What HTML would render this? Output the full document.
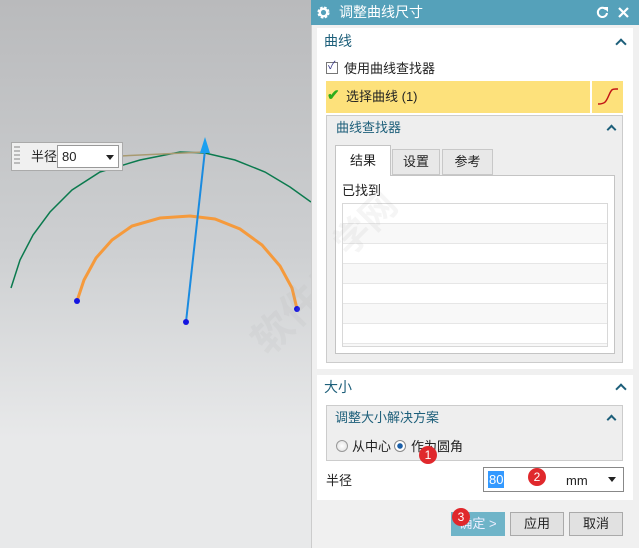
<!DOCTYPE html>
<html><head><meta charset="utf-8"><style>
*{margin:0;padding:0;box-sizing:border-box}
body{width:639px;height:548px;overflow:hidden;font-family:"Liberation Sans","Noto Sans CJK SC",sans-serif;font-size:13px;line-height:1.35;color:#222;position:relative;background:#f0f0f0}
.a{position:absolute}
.vp{left:0;top:0;width:311px;height:548px;background:linear-gradient(#b9babc,#cdcfd1 45%,#e8e9ea 80%,#e8e9ea)}
.hdr{color:#1d5f7a}
.car{position:absolute;width:8px;height:8px;border-left:2.5px solid #1d5f7a;border-top:2.5px solid #1d5f7a;transform:rotate(45deg)}
.btn{position:absolute;top:512px;height:24px;border:1px solid #aaa;background:#e1e1e1;text-align:center;line-height:22px;font-size:13px}
.badge{position:absolute;width:18px;height:18px;border-radius:50%;background:#e0282c;color:#fff;font-size:12px;text-align:center;line-height:18px}
</style></head><body>
<div class="a vp"></div>
<svg class="a" style="left:0;top:0" width="311" height="548">
<polyline fill="none" stroke="#0b7a4e" stroke-width="1.5" points="11,288 20,260 33,235 50,212 72,190 100,172 140,160 180,152 205,153 235,160 265,172 290,187 311,202"/>
<line x1="120" y1="156" x2="205" y2="152" stroke="#a89a70" stroke-width="1.5"/>
<polyline fill="none" stroke="#f59a3c" stroke-width="3" points="77,301 84,280 96,258 112,240 132,226 160,218 190,216 215,219 240,229 262,245 280,266 292,288 297,309"/>
<line x1="186" y1="322" x2="205" y2="150" stroke="#1a8be0" stroke-width="2"/>
<polygon points="205,137 200,153 210,153" fill="#1aa0f0"/>
<circle cx="77" cy="301" r="3" fill="#1515e0"/><circle cx="297" cy="309" r="3" fill="#1515e0"/><circle cx="186" cy="322" r="3" fill="#1515e0"/>
</svg>
<div class="a" style="left:11px;top:142px;width:112px;height:29px;background:#f0f0f0;border:1px solid #aaa"></div>
<div class="a" style="left:14px;top:146px;width:6px;height:20px;background:repeating-linear-gradient(#bbb 0 2px,transparent 2px 4px)"></div>
<div class="a" style="left:31px;top:148px;font-size:13px">半径</div>
<div class="a" style="left:57px;top:145px;width:62px;height:23px;background:#fff;border:1px solid #999;padding-left:4px;line-height:21px">80</div>
<div class="a" style="left:106px;top:155px;border-left:4px solid transparent;border-right:4px solid transparent;border-top:5px solid #222"></div>
<div class="a" style="left:230px;top:250px;color:rgba(170,170,170,.12);font-size:40px;transform:rotate(-45deg);white-space:nowrap;font-weight:bold">软件自学网</div>

<div class="a" style="left:311px;top:0;width:328px;height:548px;background:#f0f0f0;border-left:1px solid #ccc"></div>
<div class="a" style="left:311px;top:0;width:328px;height:25px;background:#55a1ba"></div>
<svg class="a" style="left:316px;top:5px" width="15" height="15" viewBox="0 0 16 16"><circle cx="8" cy="8" r="5" fill="none" stroke="#fff" stroke-width="3" stroke-dasharray="2.5 1.5"/><circle cx="8" cy="8" r="4" fill="none" stroke="#fff" stroke-width="2.5"/></svg>
<div class="a" style="left:339px;top:3px;color:#fff;font-size:14px">调整曲线尺寸</div>
<svg class="a" style="left:596px;top:6px" width="13" height="13" viewBox="0 0 13 13"><path d="M10 3.5A4.6 4.6 0 1 0 11 7" fill="none" stroke="#fff" stroke-width="2"/><polygon points="7,1 12,1 12,6" fill="#fff"/></svg>
<svg class="a" style="left:617px;top:6px" width="13" height="13"><path d="M2 2L11 11M11 2L2 11" stroke="#fff" stroke-width="2.2"/></svg>

<div class="a" style="left:317px;top:28px;width:316px;height:341px;background:#fff"></div>
<div class="a hdr" style="left:324px;top:32px;font-size:14px">曲线</div>
<div class="car" style="left:617px;top:40px"></div>
<div class="a" style="left:326px;top:62px;width:12px;height:12px;border:1px solid #777;background:#fff"></div>
<div class="a" style="left:328px;top:59px;font-size:11px;color:#3a3a8a">✓</div>
<div class="a" style="left:344px;top:60px">使用曲线查找器</div>
<div class="a" style="left:326px;top:81px;width:264px;height:32px;background:#fde17b"></div>
<div class="a" style="left:592px;top:81px;width:31px;height:32px;background:#fde17b"></div>
<svg class="a" style="left:596px;top:86px" width="24" height="22"><path d="M2 18C9 18 10 16 13 9S17 3 22 3" fill="none" stroke="#c21515" stroke-width="1.5"/></svg>
<div class="a" style="left:327px;top:86px;color:#2bac1b;font-size:15px;font-weight:bold">✔</div>
<div class="a" style="left:346px;top:88px">选择曲线 (1)</div>

<div class="a" style="left:326px;top:115px;width:297px;height:248px;background:#eee;border:1px solid #ccc"></div>
<div class="a hdr" style="left:336px;top:119px;font-size:13px">曲线查找器</div>
<div class="car" style="left:608px;top:126px;width:7px;height:7px"></div>
<div class="a" style="left:335px;top:175px;width:280px;height:179px;background:#fff;border:1px solid #c4c4c4"></div>
<div class="a" style="left:392px;top:149px;width:48px;height:26px;background:#e8e8e8;border:1px solid #c8c8c8;text-align:center;line-height:24px">设置</div>
<div class="a" style="left:442px;top:149px;width:51px;height:26px;background:#e8e8e8;border:1px solid #c8c8c8;text-align:center;line-height:24px">参考</div>
<div class="a" style="left:335px;top:145px;width:56px;height:31px;background:#fff;border:1px solid #c4c4c4;border-bottom:none;text-align:center;line-height:30px">结果</div>
<div class="a" style="left:342px;top:182px">已找到</div>
<div class="a" style="left:342px;top:203px;width:266px;height:144px;border:1px solid #d8d8d8;background:repeating-linear-gradient(#fff 0 20px,#f8f8f8 20px 40px)"></div>
<svg class="a" style="left:343px;top:203px" width="264" height="144"><g stroke="#e6e6e6"><line x1="0" x2="264" y1="20.5" y2="20.5"/><line x1="0" x2="264" y1="40.5" y2="40.5"/><line x1="0" x2="264" y1="60.5" y2="60.5"/><line x1="0" x2="264" y1="80.5" y2="80.5"/><line x1="0" x2="264" y1="100.5" y2="100.5"/><line x1="0" x2="264" y1="120.5" y2="120.5"/><line x1="0" x2="264" y1="140.5" y2="140.5"/></g></svg>
<div class="a" style="left:330px;top:200px;color:rgba(170,170,170,.12);font-size:36px;transform:rotate(-45deg);white-space:nowrap;font-weight:bold">学网</div>

<div class="a" style="left:317px;top:375px;width:316px;height:125px;background:#fff"></div>
<div class="a hdr" style="left:324px;top:378px;font-size:14px">大小</div>
<div class="car" style="left:617px;top:385px"></div>
<div class="a" style="left:326px;top:405px;width:297px;height:56px;background:#eee;border:1px solid #ccc"></div>
<div class="a hdr" style="left:335px;top:409px;font-size:13px">调整大小解决方案</div>
<div class="car" style="left:608px;top:416px;width:7px;height:7px"></div>
<div class="a" style="left:336px;top:440px;width:12px;height:12px;border-radius:50%;border:1px solid #999;background:radial-gradient(#fff,#ddd)"></div>
<div class="a" style="left:352px;top:438px">从中心</div>
<div class="a" style="left:394px;top:440px;width:12px;height:12px;border-radius:50%;border:1px solid #888;background:radial-gradient(#1b5fa8 0 2.5px,#fff 3px)"></div>
<div class="a" style="left:411px;top:438px">作为圆角</div>
<div class="badge" style="left:419px;top:446px">1</div>
<div class="a" style="left:326px;top:472px">半径</div>
<div class="a" style="left:483px;top:467px;width:141px;height:25px;background:#fff;border:1px solid #888"></div>
<div class="a" style="left:488px;top:471px;background:#3399ff;color:#fff;height:17px;line-height:17px;padding:0 1px">80</div>
<div class="badge" style="left:528px;top:468px">2</div>
<div class="a" style="left:566px;top:472px">mm</div>
<div class="a" style="left:608px;top:477px;border-left:4px solid transparent;border-right:4px solid transparent;border-top:5px solid #222"></div>

<div class="btn" style="left:451px;width:54px;background:#6fb4c8;border-color:#6fb4c8;color:#eef">确定 &gt;</div>
<div class="badge" style="left:452px;top:508px">3</div>
<div class="btn" style="left:510px;width:54px">应用</div>
<div class="btn" style="left:569px;width:54px">取消</div>
</body></html>
